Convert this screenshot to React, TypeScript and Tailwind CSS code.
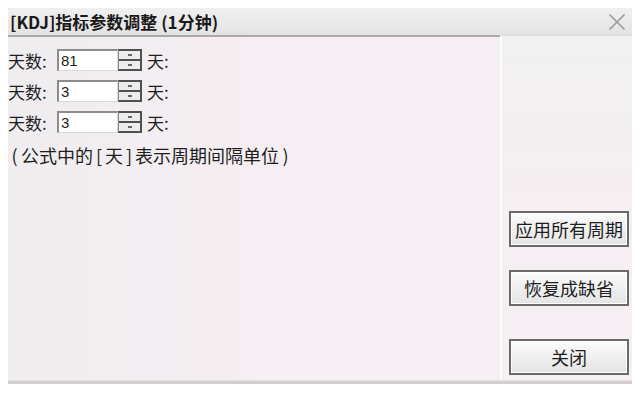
import React from "react";

const cjk = { fontFamily: '"Noto Sans CJK SC", "Noto Sans", sans-serif' };

function Spin() {
  return (
    <div className="relative w-[24px] h-[22px] border-t-2 border-b-2 border-r-2 border-l border-[#505050] border-l-[#8a8a8a] bg-[#ececec] flex flex-col">
      <div className="flex-1 flex items-center justify-center">
        <div className="w-[4px] h-[2px] bg-[#666]" />
      </div>
      <div className="h-[2px] bg-[#505050]" />
      <div className="flex-1 flex items-center justify-center">
        <div className="w-[4px] h-[2px] bg-[#666]" />
      </div>
    </div>
  );
}

function Row({ value }: { value: string }) {
  return (
    <div className="flex items-center h-[22px] text-[17px] text-[#1e1e1e]" style={cjk}>
      <span className="w-[49px] leading-none">天数:</span>
      <div className="w-[61px] h-[22px] bg-white border-t-2 border-l-2 border-[#8c8c8c] border-b border-r border-b-[#d8d8d8] border-r-[#d8d8d8] flex items-center pl-[2px] text-[15px] leading-none text-[#1e1e1e]" style={{ fontFamily: '"Liberation Sans", sans-serif' }}>
        {value}
      </div>
      <Spin />
      <span className="ml-[5px] leading-none">天:</span>
    </div>
  );
}

function Btn({ label }: { label: string }) {
  return (
    <div className="w-[120px] h-[36px] border-2 border-[#6a6a6a] bg-gradient-to-b from-[#fbfbfb] to-[#e4e4e4] flex items-center justify-center text-[18px] text-[#1e1e1e] leading-none shadow-[inset_0_0_0_1px_#ffffff]" style={cjk}>
      {label}
    </div>
  );
}

export default function App() {
  return (
    <div className="w-[640px] h-[399px] bg-white overflow-hidden relative">
      <div className="ml-[8px] mt-[8px] w-[624px] h-[376px] flex flex-col bg-[#f4eef1]">
        {/* Title bar */}
        <div className="h-[27px] flex items-center justify-between bg-gradient-to-b from-[#f0f0f0] to-[#e3e3e3]">
          <span className="pl-[2px] text-[17px] font-bold text-[#1a1a1a] leading-none" style={cjk}>
            [KDJ]指标参数调整 (1分钟)
          </span>
          <svg width="18" height="18" viewBox="0 0 18 18" className="mr-[6px]">
            <path d="M1.5 1.5 L16.5 16.5 M16.5 1.5 L1.5 16.5" stroke="#9a9a9a" strokeWidth="1.6" fill="none" />
          </svg>
        </div>
        {/* Body */}
        <div className="flex-1 flex">
          <div className="w-[492px] flex flex-col border-t-2 border-[#a9a9a9] bg-gradient-to-r from-[#efedef] via-[#f5eef2] to-[#f5eef2]">
            <div className="pt-[12px] flex flex-col gap-[9px]">
              <Row value="81" />
              <Row value="3" />
              <Row value="3" />
            </div>
            <div className="mt-[13px] flex items-center text-[18px] text-[#1e1e1e] leading-none" style={cjk}>
              <span className="inline-block w-[13px] text-center">(</span>
              <span>公式中的</span>
              <span className="inline-block w-[12px] text-center">[</span>
              <span>天</span>
              <span className="inline-block w-[12px] text-center">]</span>
              <span>表示周期间隔单位</span>
              <span className="inline-block w-[13px] text-center">)</span>
            </div>
          </div>
          <div className="flex-1 border-l-2 border-[#fbfbfb] border-t border-t-[#dcdcdc] bg-gradient-to-b from-[#f1f1f1] to-[#f5eef2] via-[#f5eef2] flex flex-col items-center pl-[4px] pt-[175px] gap-[23px]">
            <Btn label="应用所有周期" />
            <Btn label="恢复成缺省" />
            <div className="mt-[10px]">
              <Btn label="关闭" />
            </div>
          </div>
        </div>
        <div className="h-[4px] bg-[#d2cdd0] border-t border-[#e8e4e6]" />
      </div>
    </div>
  );
}
